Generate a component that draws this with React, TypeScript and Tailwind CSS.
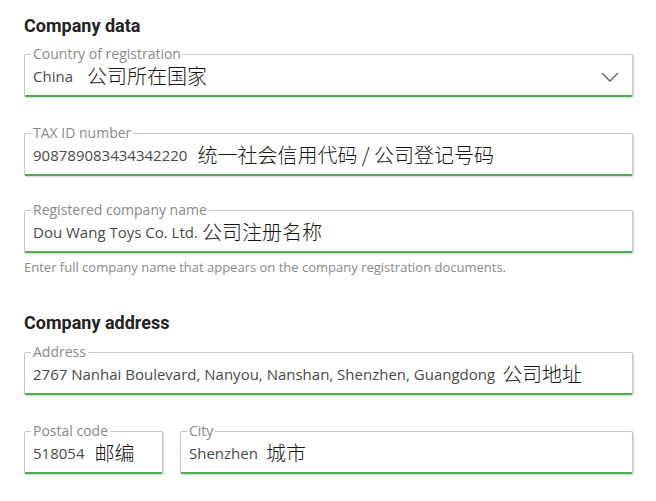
import { ReactNode } from 'react';

interface FieldProps {
  label: string;
  value: string;
  cn: string;
  gap: string;
  select?: boolean;
  className?: string;
}

function Field({ label, value, cn, gap, select, className = '' }: FieldProps) {
  return (
    <fieldset
      className={
        'min-w-0 border border-[#c8c8c8] border-b-2 border-b-[#4cae4f] rounded-[2px] px-[8px] pb-[5px] shadow-[1px_1px_2px_rgba(0,0,0,0.18)] bg-white ' +
        className
      }
    >
      <legend className="ml-[-2px] px-[2px] text-[14px] leading-[16px] text-[#8a8a8a]">{label}</legend>
      <div className="flex items-center h-[28px] whitespace-nowrap">
        <span className="text-[15px] text-[#4a4a4a]">{value}</span>
        <span
          className={'text-[20px] leading-none font-light text-[#151515] ' + gap}
          style={{ fontFamily: '"Noto Sans CJK SC", sans-serif' }}
        >
          {cn}
        </span>
        {select && (
          <svg className="ml-auto mr-[5px] mt-[2px]" width="18" height="10" viewBox="0 0 18 10" fill="none">
            <polyline points="1,1 9,9 17,1" stroke="#707070" strokeWidth="1.6" />
          </svg>
        )}
      </div>
    </fieldset>
  );
}

function Heading({ children }: { children: ReactNode }) {
  return (
    <h2
      className="text-[18px] leading-[24px] font-bold text-[#222]"
      style={{ fontFamily: 'Roboto, sans-serif' }}
    >
      {children}
    </h2>
  );
}

export default function App() {
  return (
    <div
      className="w-[656px] h-[501px] bg-white overflow-hidden pl-[24px] pt-[14px]"
      style={{ fontFamily: '"Open Sans", "Noto Sans CJK SC", sans-serif' }}
    >
      <div className="w-[609px] flex flex-col">
        <Heading>Company data</Heading>
        <Field className="mt-[8px]" label="Country of registration" value="China" cn="公司所在国家" gap="ml-[14px]" select />
        <Field className="mt-[28px]" label="TAX ID number" value="908789083434342220" cn="统一社会信用代码 / 公司登记号码" gap="ml-[10px]" />
        <Field className="mt-[26px]" label="Registered company name" value="Dou Wang Toys Co. Ltd." cn="公司注册名称" gap="ml-[4px]" />
        <p className="mt-[6px] text-[13px] leading-[16px] text-[#8a8a8a]">
          Enter full company name that appears on the company registration documents.
        </p>

        <div className="mt-[36px]">
          <Heading>Company address</Heading>
        </div>
        <Field
          className="mt-[9px]"
          label="Address"
          value="2767 Nanhai Boulevard, Nanyou, Nanshan, Shenzhen, Guangdong"
          cn="公司地址"
          gap="ml-[7px]"
        />
        <div className="mt-[28px] flex gap-[17px]">
          <Field className="w-[139px] shrink-0" label="Postal code" value="518054" cn="邮编" gap="ml-[10px]" />
          <Field className="flex-1" label="City" value="Shenzhen" cn="城市" gap="ml-[8px]" />
        </div>
      </div>
    </div>
  );
}
